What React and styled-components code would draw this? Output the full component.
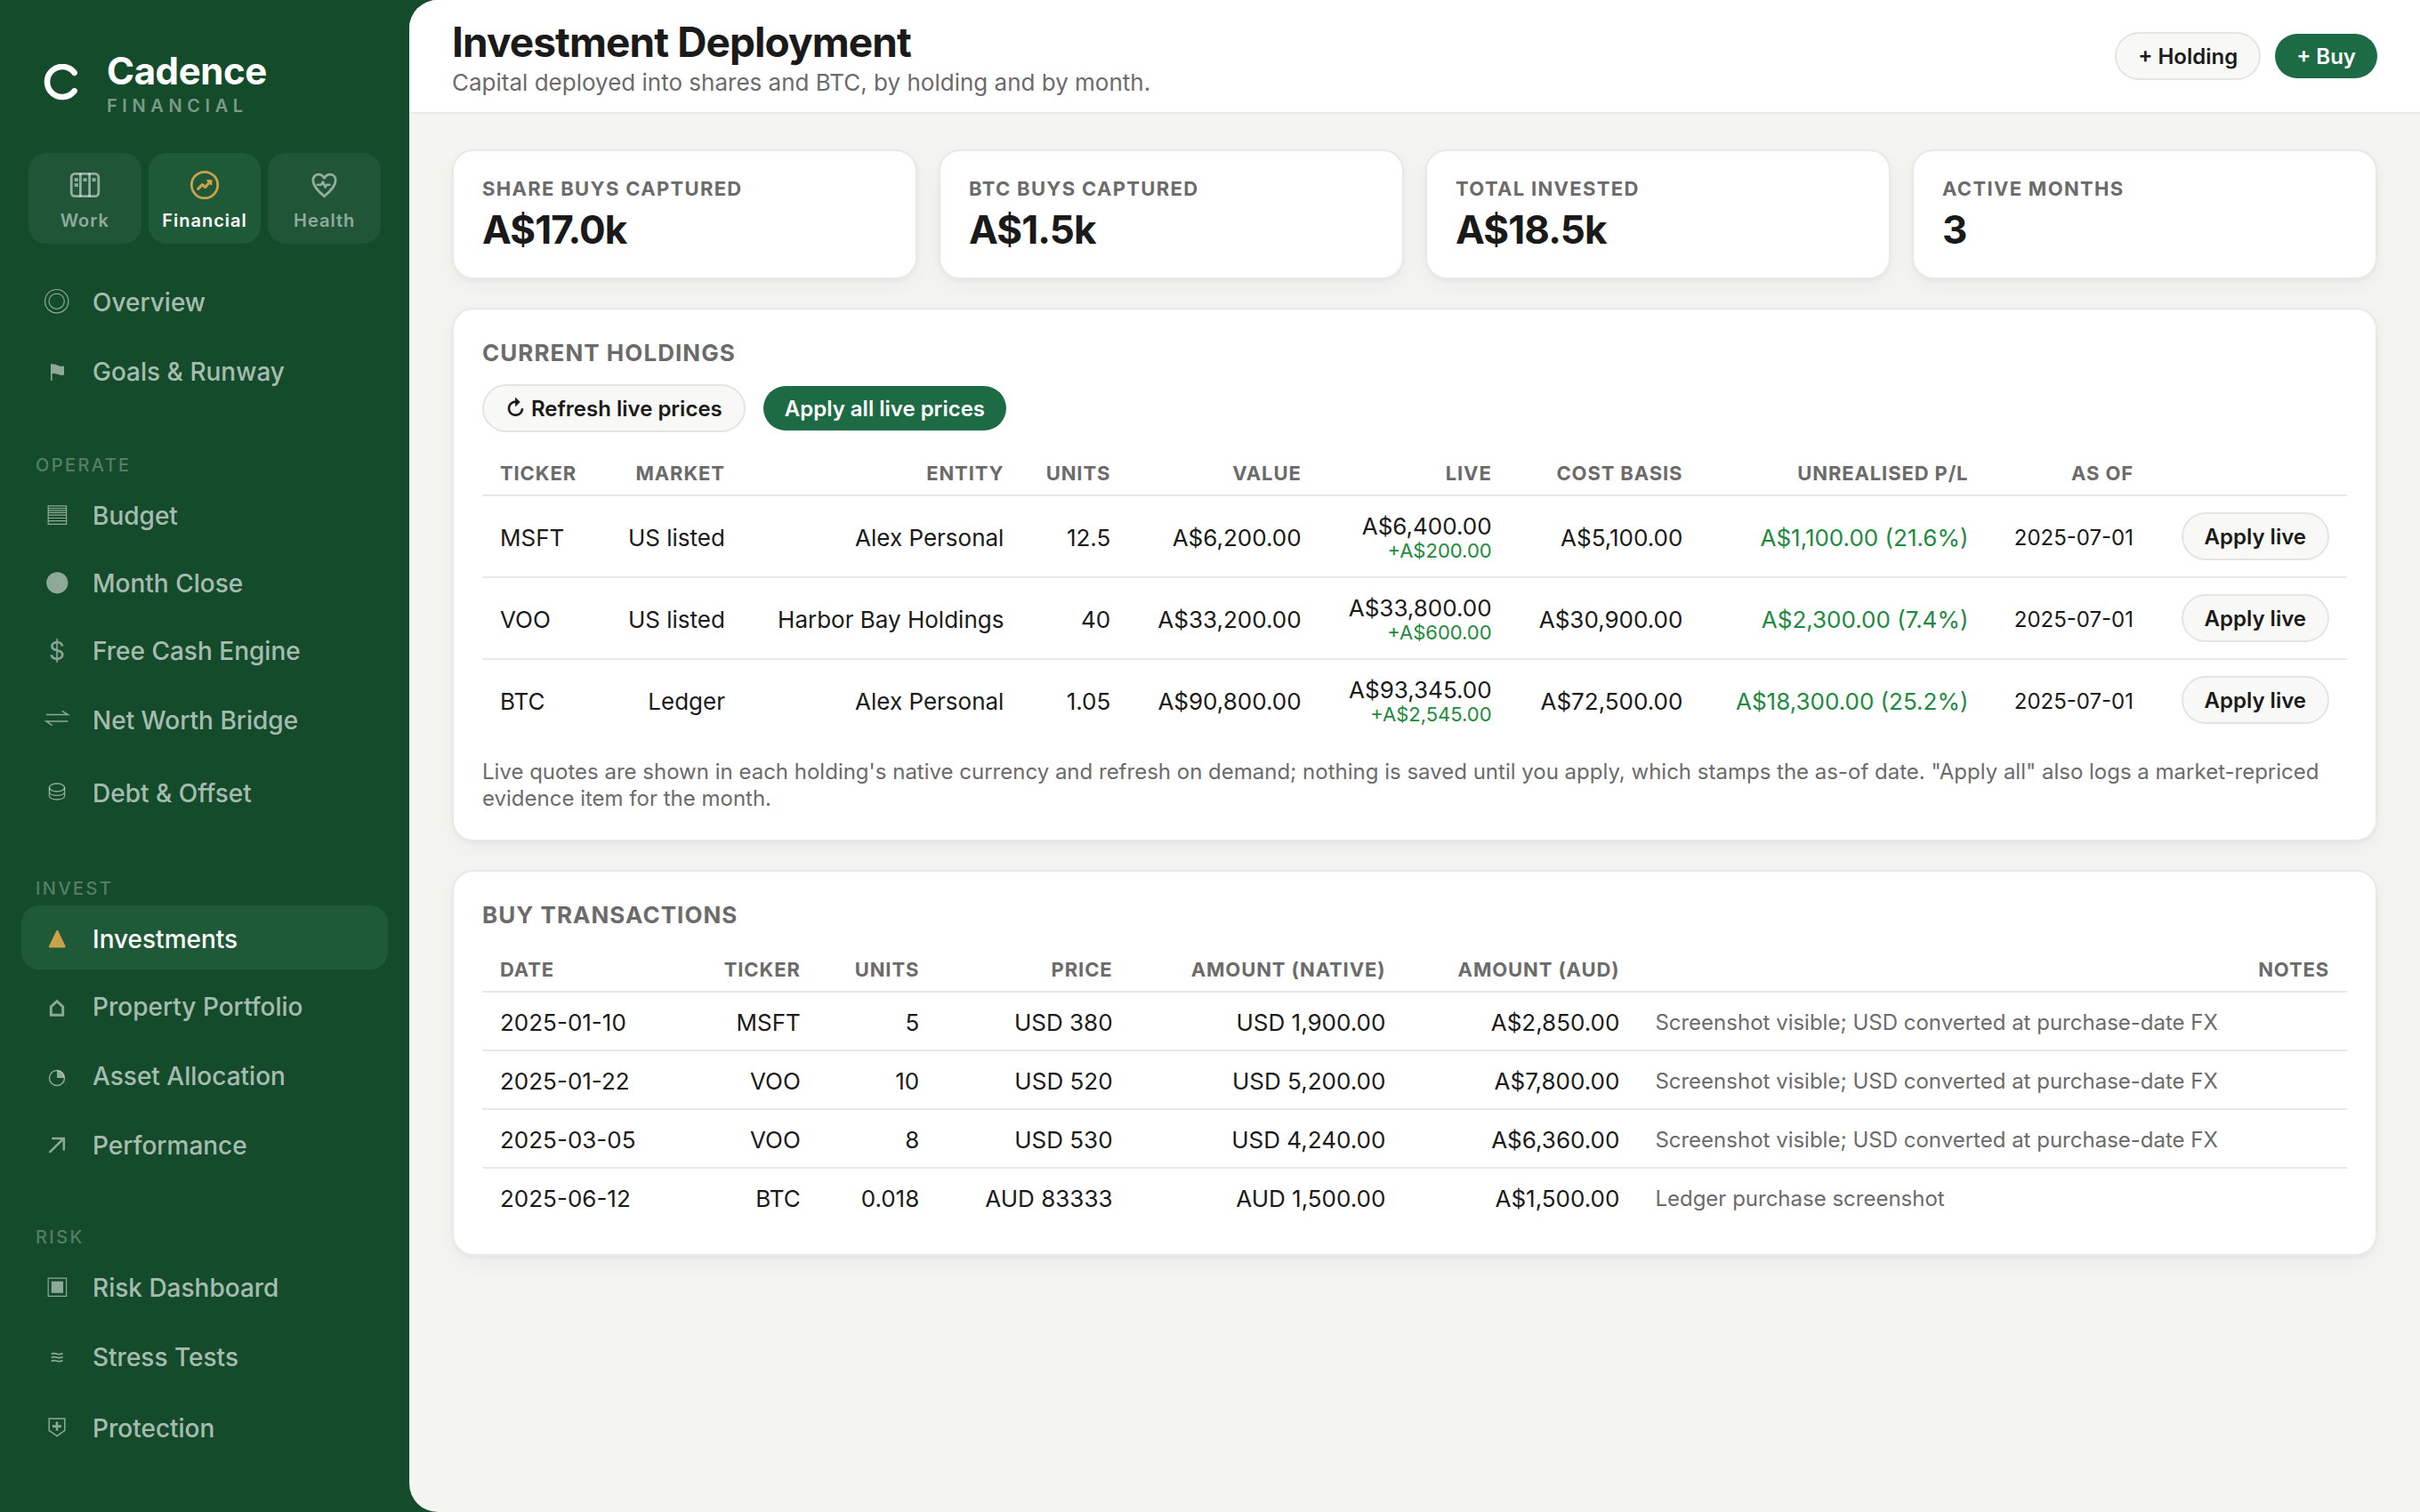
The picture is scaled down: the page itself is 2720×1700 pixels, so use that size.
import React from "react";
import styled, { createGlobalStyle, css } from "styled-components";

const GlobalStyle = createGlobalStyle`
  *, *::before, *::after { box-sizing: border-box; }
  body {
    margin: 0;
    background: #134b2b;
    color: #1a1a1a;
    font-family: Inter, "DejaVu Sans", sans-serif;
    font-size: 26px;
    line-height: 28px;
  }
  h1, h2, p { margin: 0; }
  a { color: inherit; text-decoration: none; }
  button { font: inherit; cursor: pointer; }
`;

const Shell = styled.div`
  display: grid;
  grid-template-columns: 460px minmax(0, 1fr);
  min-height: 100vh;
`;

const Sidebar = styled.aside`
  display: flex;
  flex-direction: column;
  color: #fff;
`;

const Brand = styled.div`
  display: flex;
  align-items: center;
  gap: 30px;
  padding: 56px 46px 0;
`;

const BrandMark = styled.svg`
  width: 44px;
  height: 44px;
  flex: none;
`;

const BrandName = styled.div`
  font-size: 42px;
  line-height: 48px;
  font-weight: 700;
  letter-spacing: -0.01em;
`;

const BrandSub = styled.div`
  padding-top: 2px;
  font-size: 20px;
  line-height: 26px;
  font-weight: 600;
  letter-spacing: 0.28em;
  text-transform: uppercase;
  color: rgba(255, 255, 255, 0.45);
`;

const Modes = styled.div`
  display: grid;
  grid-template-columns: repeat(3, minmax(0, 1fr));
  gap: 8px;
  padding: 40px 32px 0;
`;

const Mode = styled.button`
  display: flex;
  flex-direction: column;
  align-items: center;
  gap: 10px;
  height: 102px;
  padding: 18px 0 0;
  border: 0;
  border-radius: 20px;
  background: ${(p) => (p.$active ? "#1f5a38" : "rgba(255, 255, 255, 0.06)")};
  color: ${(p) => (p.$active ? "#fff" : "rgba(255, 255, 255, 0.52)")};
  font-size: 20px;
  line-height: 24px;
  font-weight: 600;
  letter-spacing: 0.05em;

  svg {
    width: 36px;
    height: 36px;
    color: ${(p) => (p.$active ? "#c9a24a" : "inherit")};
  }
`;

const Nav = styled.nav`
  display: flex;
  flex-direction: column;
  gap: 4px;
  padding: 28px 24px 0;
`;

const NavHeading = styled.div`
  padding: 53px 16px 3px;
  font-size: 20px;
  line-height: 24px;
  font-weight: 500;
  letter-spacing: 0.12em;
  text-transform: uppercase;
  color: rgba(255, 255, 255, 0.3);
`;

const NavLink = styled.a`
  display: flex;
  align-items: center;
  gap: 24px;
  min-height: ${(p) => p.$height}px;
  padding: 20px 24px 16px;
  border-radius: 20px;
  font-size: 28px;
  line-height: 34px;
  font-weight: 500;
  color: ${(p) => (p.$active ? "#fff" : "rgba(255, 255, 255, 0.65)")};
  background: ${(p) => (p.$active ? "#1f5a38" : "transparent")};
`;

const NavIcon = styled.svg`
  width: 32px;
  height: 32px;
  flex: none;
  fill: none;
  stroke: currentColor;
  stroke-width: 1.2;
  color: ${(p) => (p.$active ? "#c9a24a" : "rgba(255, 255, 255, 0.52)")};
`;

const NavSymbol = styled.span`
  width: 32px;
  flex: none;
  text-align: center;
  font-weight: 400;
  color: rgba(255, 255, 255, 0.52);
`;

const Main = styled.main`
  overflow: hidden;
  border-radius: 32px 0 0 32px;
  background: #f4f4f0;
`;

const Header = styled.header`
  display: flex;
  align-items: center;
  justify-content: space-between;
  height: 128px;
  padding: 0 48px;
  border-bottom: 2px solid #e9e9e9;
  background: #fff;
`;

const Title = styled.h1`
  font-size: 46px;
  line-height: 60px;
  font-weight: 700;
  letter-spacing: -0.02em;
`;

const Subtitle = styled.p`
  font-size: 26px;
  line-height: 32px;
  color: #6b6b6b;
`;

const Actions = styled.div`
  display: flex;
  align-items: center;
  justify-content: ${(p) => (p.$end ? "flex-end" : "flex-start")};
  gap: ${(p) => p.$gap || 16}px;
`;

const Button = styled.button`
  padding: 11px 24px 9px;
  border-radius: 27px;
  font-size: 24px;
  line-height: 30px;
  font-weight: 600;
  white-space: nowrap;
  ${(p) =>
    p.$primary
      ? css`
          border: 0;
          background: #1d6b45;
          color: #fff;
        `
      : css`
          border: 2px solid #e4e4e2;
          background: #f8f8f6;
          color: #1a1a1a;
        `}
`;

const Content = styled.div`
  display: flex;
  flex-direction: column;
  gap: 32px;
  padding: 40px 48px;
`;

const Stats = styled.div`
  display: grid;
  grid-template-columns: repeat(4, minmax(0, 1fr));
  gap: 24px;
`;

const Card = styled.section`
  padding: 32px;
  border: 2px solid #e9e9e8;
  border-radius: 24px;
  background: #fff;
  box-shadow: 0 2px 4px rgba(0, 0, 0, 0.04), 0 8px 24px rgba(0, 0, 0, 0.04);
`;

const StatCard = styled(Card)`
  padding: 28px 32px;
`;

const StatLabel = styled.div`
  font-size: 22px;
  line-height: 28px;
  font-weight: 700;
  letter-spacing: 0.06em;
  text-transform: uppercase;
  color: #6b6b6b;
`;

const StatValue = styled.div`
  padding-top: 6px;
  font-size: 44px;
  line-height: 52px;
  font-weight: 700;
  letter-spacing: -0.02em;
`;

const PanelTitle = styled.h2`
  font-size: 26px;
  line-height: 34px;
  font-weight: 700;
  letter-spacing: 0.04em;
  text-transform: uppercase;
  color: #6b6b6b;
`;

const Toolbar = styled(Actions)`
  padding: 18px 0 2px;
`;

const Table = styled.table`
  width: 100%;
  margin-top: 20px;
  border-collapse: separate;
  border-spacing: 0;
`;

const Th = styled.th`
  padding: 10px 20px;
  border-bottom: 2px solid #e9e9e9;
  font-size: 22px;
  line-height: 28px;
  font-weight: 700;
  letter-spacing: 0.04em;
  text-transform: uppercase;
  text-align: right;
  white-space: nowrap;
  color: #6b6b6b;

  &:first-child { text-align: left; }
`;

const Td = styled.td`
  padding: 20px 20px 16px;
  border-bottom: 2px solid #e9e9e9;
  text-align: right;
  white-space: nowrap;
  color: ${(p) => (p.$positive ? "#1e8a3e" : "inherit")};

  &:first-child { text-align: left; }
  tr:last-child > & { border-bottom: 0; }
`;

const DateTd = styled(Td)`
  font-size: 24px;
`;

const ActionTd = styled(Td)`
  padding: 18px 20px;
`;

const NoteTd = styled(DateTd)`
  text-align: left;
  color: #6b6b6b;
`;

const Delta = styled.div`
  font-size: 22px;
  line-height: 26px;
  color: #1e8a3e;
`;

const Note = styled.p`
  padding-top: 21px;
  margin-bottom: -1px;
  font-size: 24px;
  line-height: 30px;
  color: #6b6b6b;
`;

const WorkIcon = () => (
  <svg viewBox="0 0 36 36" fill="none" stroke="currentColor" strokeWidth="2.8" aria-hidden="true">
    <rect x="3.2" y="5.400" width="30.600" height="25.200" rx="4" />
    <path d="M13.400 5v26M23.600 5v26" />
    <path d="M6.800 12.200h4M6.800 18.200h4M16.600 12.200h4M26.600 12.200h4" strokeWidth="3.800" />
  </svg>
);

const FinancialIcon = () => (
  <svg viewBox="0 0 36 36" fill="none" stroke="currentColor" strokeWidth="2.8" aria-hidden="true">
    <circle cx="18" cy="18" r="14.700" />
    <path d="M10.700 22.300l4.600-4.700 3.400 2.800 5-5.600" strokeWidth="3.2" strokeLinecap="round" strokeLinejoin="round" />
    <path d="M21.200 13h4.200v4.200z" fill="currentColor" strokeWidth="2" strokeLinejoin="round" />
  </svg>
);

const HealthIcon = () => (
  <svg
    viewBox="0 0 36 36"
    fill="none"
    stroke="currentColor"
    strokeWidth="2.8"
    strokeLinecap="round"
    strokeLinejoin="round"
    aria-hidden="true"
  >
    <path d="M17.500 30.700C10.500 25 4.800 19.500 4.800 12.800 4.800 8.800 7.600 6.100 11 6.100c2.700 0 5 1.500 6.500 4.200 1.500-2.700 3.800-4.200 6.500-4.200 3.400 0 6.200 2.700 6.200 6.700 0 6.700-5.700 12.200-12.700 17.900z" />
    <path d="M9.800 17.700h4.200l2-3.200 2.600 6 1.600-2.800h3.200" strokeWidth="2.6" />
  </svg>
);

const ICONS = {
  overview: (
    <>
      <circle cx="15.700" cy="14.700" r="13.200" />
      <circle cx="15.700" cy="14.700" r="8.600" />
    </>
  ),
  flag: (
    <path
      d="M9 7h1.600v.8c2-.6 4 0 6 1 2.400 1.200 4.800 1.400 7.400.8v10c-2.600.6-5 .2-7.200-.8-2-.8-4-1.200-6.200-.4V26H9z"
      fill="currentColor"
      stroke="none"
    />
  ),
  budget: <path d="M6.200 4.900h20.400v20.400H6.200zM6.200 7.500h20.400M6.200 9.900h20.400M6.200 12.300h20.400M6.200 15.100h20.400M6.200 18.500h20.400M6.200 21.700h20.400" />,
  dot: <circle cx="16.300" cy="15.300" r="12.100" fill="currentColor" stroke="none" />,
  exchange: <path d="M4 9.500h24.400l-6.600-4.200M28.400 17H4l6.800 4.600" strokeWidth="1.500" />,
  stack: (
    <g strokeWidth="1.400">
      <ellipse cx="16" cy="9.400" rx="8.600" ry="4.400" />
      <path d="M7.400 9.400v9.400c0 5.600 17.200 5.600 17.200 0V9.400M7.400 14.200c0 5.600 17.200 5.600 17.200 0" />
    </g>
  ),
  triangle: (
    <path d="M16.300 7.200l8.200 17H8.100z" fill="currentColor" strokeWidth="2.400" strokeLinejoin="round" />
  ),
  house: <path d="M9.300 25.200V16L16 9.800l6.700 6.200v9.200z" strokeWidth="2.900" />,
  pie: (
    <>
      <circle cx="16" cy="18" r="8.500" strokeWidth="1.500" />
      <path d="M16 18V9.500a8.500 8.500 0 0 1 8.500 8.500z" fill="currentColor" stroke="none" />
    </>
  ),
  arrow: <path d="M8.200 23.200L23.600 8M11.200 8h12.600v12.600" strokeWidth="2.500" strokeLinecap="round" />,
  square: (
    <>
      <path d="M6.200 5.100h20.400v20.200H6.200z" />
      <path d="M9.800 8.700h13.200v13H9.800z" fill="currentColor" stroke="none" />
    </>
  ),
  waves: (
    <path
      d="M9.800 12.600c2-1.800 4-1.200 6.400-.4 2.400.8 4.400.6 6.400-.6M9.800 16.600c2-1.800 4-1.200 6.400-.4 2.400.8 4.400.6 6.400-.6M9.800 20.600c2-1.800 4-1.200 6.400-.4 2.400.8 4.400.6 6.400-.6"
      strokeWidth="1.700"
    />
  ),
  shield: (
    <>
      <path d="M7.200 5h17.600v13.400L16 24.600l-8.800-6.200z" strokeWidth="1.500" />
      <path d="M16 8.600v10M11 13.600h10" strokeWidth="2.600" />
    </>
  ),
};

const MODES = [
  { label: "Work", icon: <WorkIcon /> },
  { label: "Financial", icon: <FinancialIcon />, active: true },
  { label: "Health", icon: <HealthIcon /> },
];

const NAV = [
  { items: [["overview", "Overview", 72], ["flag", "Goals & Runway", 76]] },
  {
    heading: "Operate",
    items: [
      ["budget", "Budget", 72],
      ["dot", "Month Close", 72],
      ["$", "Free Cash Engine", 72],
      ["exchange", "Net Worth Bridge", 76],
      ["stack", "Debt & Offset", 80],
    ],
  },
  {
    heading: "Invest",
    items: [
      ["triangle", "Investments", 72],
      ["house", "Property Portfolio", 72],
      ["pie", "Asset Allocation", 76],
      ["arrow", "Performance", 72],
    ],
  },
  {
    heading: "Risk",
    items: [
      ["square", "Risk Dashboard", 72],
      ["waves", "Stress Tests", 76],
      ["shield", "Protection", 76],
    ],
  },
];

const STATS = [
  ["Share buys captured", "A$17.0k"],
  ["BTC buys captured", "A$1.5k"],
  ["Total invested", "A$18.5k"],
  ["Active months", "3"],
];

const HOLDINGS = [
  ["MSFT", "US listed", "Alex Personal", "12.5", "A$6,200.00", "A$6,400.00", "+A$200.00", "A$5,100.00", "A$1,100.00 (21.6%)", "2025-07-01"],
  ["VOO", "US listed", "Harbor Bay Holdings", "40", "A$33,200.00", "A$33,800.00", "+A$600.00", "A$30,900.00", "A$2,300.00 (7.4%)", "2025-07-01"],
  ["BTC", "Ledger", "Alex Personal", "1.05", "A$90,800.00", "A$93,345.00", "+A$2,545.00", "A$72,500.00", "A$18,300.00 (25.2%)", "2025-07-01"],
];

const FX_NOTE = "Screenshot visible; USD converted at purchase-date FX";

const BUYS = [
  ["2025-01-10", "MSFT", "5", "USD 380", "USD 1,900.00", "A$2,850.00", FX_NOTE],
  ["2025-01-22", "VOO", "10", "USD 520", "USD 5,200.00", "A$7,800.00", FX_NOTE],
  ["2025-03-05", "VOO", "8", "USD 530", "USD 4,240.00", "A$6,360.00", FX_NOTE],
  ["2025-06-12", "BTC", "0.018", "AUD 83333", "AUD 1,500.00", "A$1,500.00", "Ledger purchase screenshot"],
];

const HOLDING_COLUMNS = ["Ticker", "Market", "Entity", "Units", "Value", "Live", "Cost basis", "Unrealised P/L", "As of", ""];
const BUY_COLUMNS = ["Date", "Ticker", "Units", "Price", "Amount (native)", "Amount (AUD)", "Notes"];

function HeadRow({ columns }) {
  return (
    <thead>
      <tr>
        {columns.map((c) => (
          <Th key={c} scope="col">{c}</Th>
        ))}
      </tr>
    </thead>
  );
}

export default function App() {
  return (
    <>
      <GlobalStyle />
      <Shell>
        <Sidebar>
          <Brand>
            <BrandMark viewBox="0 0 44 44" fill="none" aria-hidden="true">
              <path d="M37.600 9.800A17 17 0 1 0 37.600 30.200" stroke="#fff" strokeWidth="6.600" strokeLinecap="round" />
            </BrandMark>
            <div>
              <BrandName>Cadence</BrandName>
              <BrandSub>Financial</BrandSub>
            </div>
          </Brand>
          <Modes>
            {MODES.map((m) => (
              <Mode key={m.label} type="button" $active={m.active}>
                {m.icon}
                {m.label}
              </Mode>
            ))}
          </Modes>
          <Nav>
            {NAV.map((group) => (
              <React.Fragment key={group.heading || "top"}>
                {group.heading && <NavHeading>{group.heading}</NavHeading>}
                {group.items.map(([icon, label, height]) => {
                  const active = label === "Investments";
                  return (
                    <NavLink
                      key={label}
                      href="#"
                      $height={height}
                      $active={active}
                      aria-current={active ? "page" : undefined}
                    >
                      {ICONS[icon] ? (
                        <NavIcon viewBox="0 0 32 32" $active={active} aria-hidden="true">
                          {ICONS[icon]}
                        </NavIcon>
                      ) : (
                        <NavSymbol aria-hidden="true">{icon}</NavSymbol>
                      )}
                      {label}
                    </NavLink>
                  );
                })}
              </React.Fragment>
            ))}
          </Nav>
        </Sidebar>
        <Main>
          <Header>
            <div>
              <Title>Investment Deployment</Title>
              <Subtitle>Capital deployed into shares and BTC, by holding and by month.</Subtitle>
            </div>
            <Actions>
              <Button type="button">+ Holding</Button>
              <Button type="button" $primary>+ Buy</Button>
            </Actions>
          </Header>
          <Content>
            <Stats>
              {STATS.map(([label, value]) => (
                <StatCard key={label}>
                  <StatLabel>{label}</StatLabel>
                  <StatValue>{value}</StatValue>
                </StatCard>
              ))}
            </Stats>
            <Card>
              <PanelTitle>Current holdings</PanelTitle>
              <Toolbar $gap={20}>
                <Button type="button">↻ Refresh live prices</Button>
                <Button type="button" $primary>Apply all live prices</Button>
              </Toolbar>
              <Table>
                <HeadRow columns={HOLDING_COLUMNS} />
                <tbody>
                  {HOLDINGS.map(([ticker, market, entity, units, value, live, delta, cost, pl, asOf]) => (
                    <tr key={ticker}>
                      <Td>{ticker}</Td>
                      <Td>{market}</Td>
                      <Td>{entity}</Td>
                      <Td>{units}</Td>
                      <Td>{value}</Td>
                      <Td>
                        {live}
                        <Delta>{delta}</Delta>
                      </Td>
                      <Td>{cost}</Td>
                      <Td $positive>{pl}</Td>
                      <DateTd>{asOf}</DateTd>
                      <ActionTd>
                        <Actions $end>
                          <Button type="button">Apply live</Button>
                        </Actions>
                      </ActionTd>
                    </tr>
                  ))}
                </tbody>
              </Table>
              <Note>
                Live quotes are shown in each holding's native currency and refresh on demand; nothing is saved until
                you apply, which stamps the as-of date. "Apply all" also logs a market-repriced evidence item for the
                month.
              </Note>
            </Card>
            <Card>
              <PanelTitle>Buy transactions</PanelTitle>
              <Table>
                <HeadRow columns={BUY_COLUMNS} />
                <tbody>
                  {BUYS.map(([date, ticker, units, price, native, aud, note]) => (
                    <tr key={date}>
                      <Td>{date}</Td>
                      <Td>{ticker}</Td>
                      <Td>{units}</Td>
                      <Td>{price}</Td>
                      <Td>{native}</Td>
                      <Td>{aud}</Td>
                      <NoteTd>{note}</NoteTd>
                    </tr>
                  ))}
                </tbody>
              </Table>
            </Card>
          </Content>
        </Main>
      </Shell>
    </>
  );
}
